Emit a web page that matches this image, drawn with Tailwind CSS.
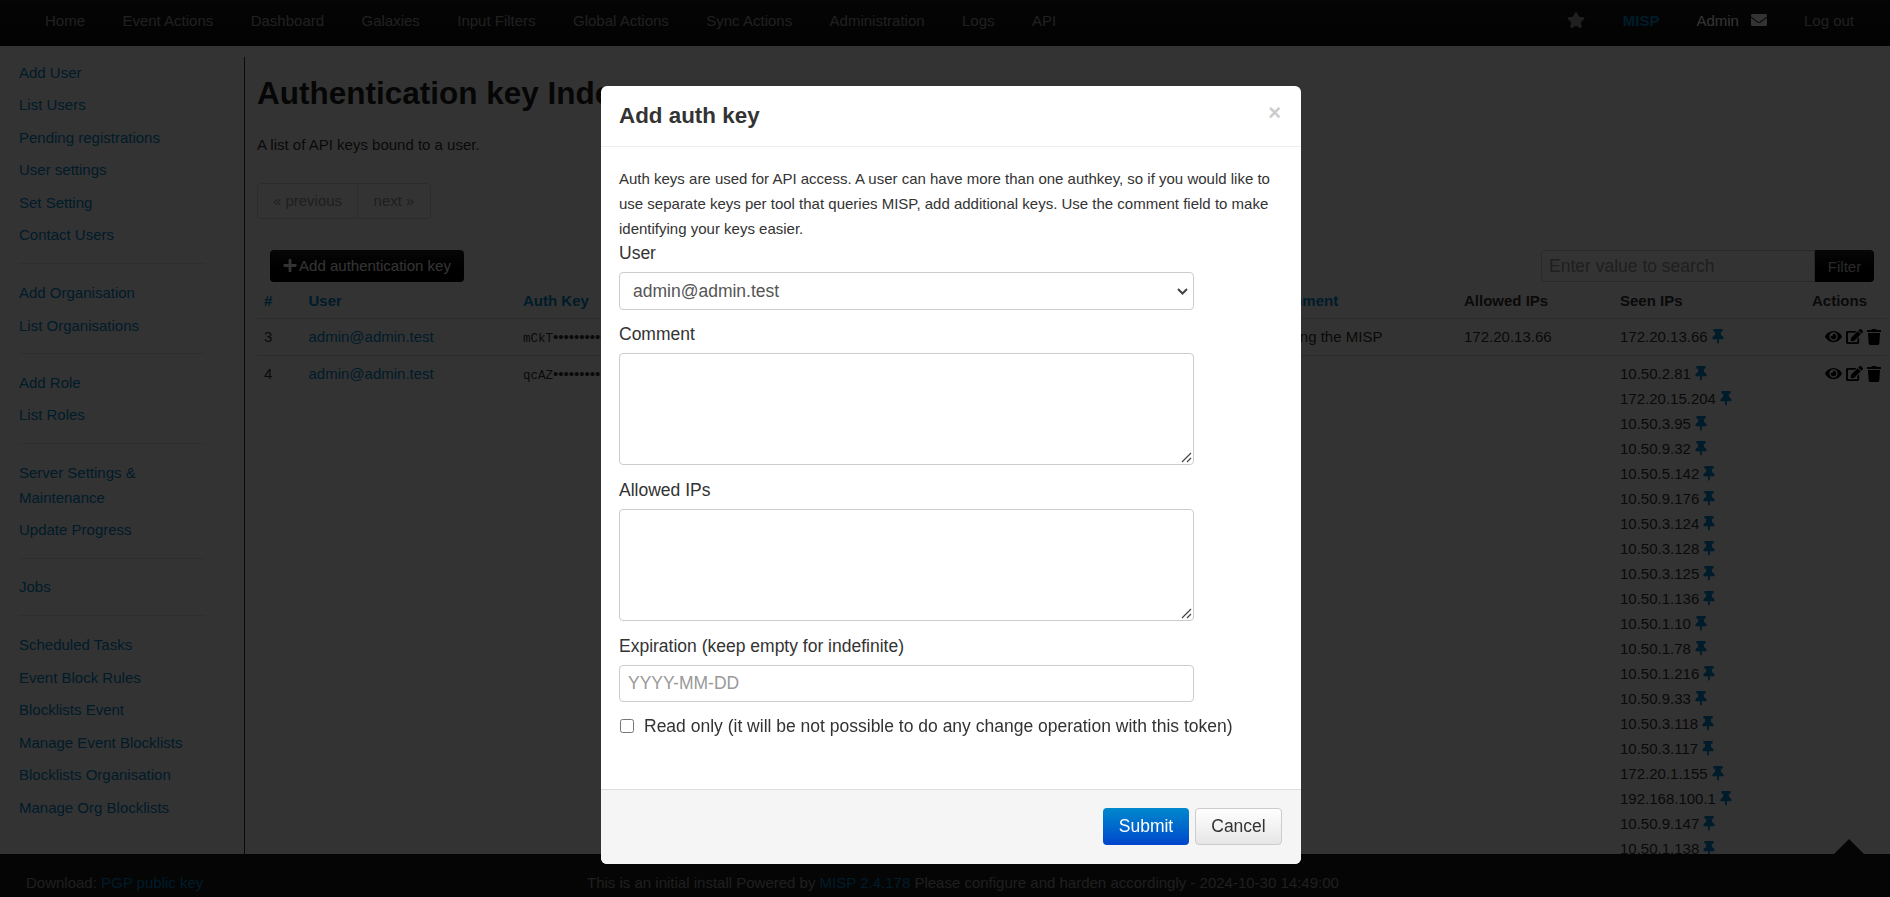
<!DOCTYPE html>
<html lang="en">
<head>
<meta charset="utf-8">
<title>MISP</title>
<script src="https://cdn.jsdelivr.net/npm/@tailwindcss/browser@4"></script>
</head>
<body class="h-screen overflow-hidden bg-white font-['Liberation_Sans',Arial,sans-serif] text-[15px] leading-[25px] text-[#333]">
<div class="flex h-screen flex-col">
  <header class="flex h-[46px] shrink-0 bg-gradient-to-b from-[#1a1a1a] to-[#0d0d0d] pb-[6px] text-[#a0a0a0]">
    <nav class="flex flex-1 items-center gap-[37.4px] pl-[45px]">
      <a>Home</a><a>Event Actions</a><a>Dashboard</a><a>Galaxies</a><a>Input Filters</a><a>Global Actions</a><a>Sync Actions</a><a>Administration</a><a>Logs</a><a>API</a>
    </nav>
    <div class="flex items-center pr-[36px]">
      <svg class="mr-[38px] h-[16px] w-[18px] fill-[#a0a0a0]" viewBox="0 0 576 512"><path d="M259.3 17.8L194 150.2 47.9 171.5c-26.2 3.8-36.7 36.1-17.7 54.6l105.7 103-25 145.5c-4.5 26.3 23.2 46 46.4 33.7L288 439.6l130.7 68.7c23.2 12.2 50.9-7.4 46.4-33.7l-25-145.5 105.7-103c19-18.5 8.5-50.8-17.7-54.6L382 150.2 316.7 17.8c-11.7-23.6-45.6-23.9-57.4 0z"/></svg>
      <a class="mr-[37px] font-bold text-[#0088cc]">MISP</a>
      <a class="mr-[12px] text-white">Admin</a>
      <svg class="mr-[37px] h-[16px] w-[16px] fill-white" viewBox="0 0 512 512"><path d="M502.3 190.8c3.9-3.1 9.7-.2 9.7 4.7V400c0 26.5-21.5 48-48 48H48c-26.5 0-48-21.5-48-48V195.6c0-5 5.7-7.8 9.7-4.7 22.4 17.4 52.1 39.5 154.1 113.6 21.1 15.4 56.7 47.8 92.2 47.6 35.7.3 72-32.8 92.3-47.6 102-74.1 131.6-96.3 154-113.7zM256 320c23.2.4 56.6-29.2 73.4-41.4 132.7-96.3 142.8-104.7 173.4-128.7 5.8-4.5 9.2-11.5 9.2-18.9v-19c0-26.5-21.5-48-48-48H48C21.5 64 0 85.5 0 112v19c0 7.4 3.4 14.3 9.2 18.9 30.6 23.9 40.7 32.4 173.4 128.7 16.8 12.2 50.2 41.8 73.4 41.4z"/></svg>
      <a>Log out</a>
    </div>
  </header>

  <div class="flex min-h-0 flex-1 overflow-hidden">
    <aside class="mt-[11px] w-[245px] shrink-0 border-r border-[#333] pl-[19px] text-[#0088cc]">
      <a class="-mt-px flex h-[32.5px] items-center">Add User</a>
      <a class="flex h-[32.5px] items-center">List Users</a>
      <a class="flex h-[32.5px] items-center">Pending registrations</a>
      <a class="flex h-[32.5px] items-center">User settings</a>
      <a class="flex h-[32.5px] items-center">Set Setting</a>
      <a class="flex h-[32.5px] items-center">Contact Users</a>
      <div class="flex h-[25.5px] w-[186px] items-center"><div class="h-px w-full bg-[#e5e5e5]"></div></div>
      <a class="flex h-[32.5px] items-center">Add Organisation</a>
      <a class="flex h-[32.5px] items-center">List Organisations</a>
      <div class="flex h-[24.5px] w-[186px] items-center"><div class="h-px w-full bg-[#e5e5e5]"></div></div>
      <a class="flex h-[32.5px] items-center">Add Role</a>
      <a class="flex h-[32.5px] items-center">List Roles</a>
      <div class="flex h-[25px] w-[186px] items-center"><div class="h-px w-full bg-[#e5e5e5]"></div></div>
      <a class="block py-[3.75px]">Server Settings &amp;<br>Maintenance</a>
      <a class="flex h-[32.5px] items-center">Update Progress</a>
      <div class="flex h-[24.5px] w-[186px] items-center"><div class="h-px w-full bg-[#e5e5e5]"></div></div>
      <a class="flex h-[32.5px] items-center">Jobs</a>
      <div class="flex h-[25.5px] w-[186px] items-center"><div class="h-px w-full bg-[#e5e5e5]"></div></div>
      <a class="flex h-[32.5px] items-center">Scheduled Tasks</a>
      <a class="flex h-[32.5px] items-center">Event Block Rules</a>
      <a class="flex h-[32.5px] items-center">Blocklists Event</a>
      <a class="flex h-[32.5px] items-center">Manage Event Blocklists</a>
      <a class="flex h-[32.5px] items-center">Blocklists Organisation</a>
      <a class="flex h-[32.5px] items-center">Manage Org Blocklists</a>
    </aside>

    <main class="min-w-0 flex-1 pl-[12px] pr-[3px]">
      <h2 class="mt-[27px] h-[40px] text-[31.5px] leading-[40px] font-bold text-[#222]">Authentication key Index</h2>
      <p class="mt-[19px]">A list of API keys bound to a user.</p>
      <div class="mt-[26px] flex h-[36px] w-[174px] rounded-[4px] border border-[#ddd] text-[#999]">
        <span class="flex w-[100px] items-center justify-center border-r border-[#ddd] pb-px">« previous</span>
        <span class="flex flex-1 items-center justify-center pb-px">next »</span>
      </div>
      <div class="mt-[31px] flex h-[32px] items-stretch justify-between pl-[13px] pr-[13px]">
        <button class="flex w-[194px] items-center justify-center gap-[2px] rounded-[4px] bg-gradient-to-b from-[#222] to-[#000] pb-px text-white">
          <svg class="h-[15px] w-[14px] fill-white" viewBox="0 0 448 512"><path d="M416 208H272V64c0-17.67-14.33-32-32-32h-32c-17.67 0-32 14.33-32 32v144H32c-17.67 0-32 14.33-32 32v32c0 17.67 14.33 32 32 32h144v144c0 17.67 14.33 32 32 32h32c17.67 0 32-14.33 32-32V304h144c17.67 0 32-14.33 32-32v-32c0-17.67-14.33-32-32-32z"/></svg>
          <span>Add authentication key</span>
        </button>
        <div class="flex">
          <input class="h-[32px] w-[274px] rounded-l-[4px] border border-[#ccc] bg-white px-[7px] text-[17.5px] placeholder:text-[#999]" placeholder="Enter value to search">
          <button class="w-[59px] rounded-r-[4px] bg-gradient-to-b from-[#222] to-[#000] text-[#ccc]">Filter</button>
        </div>
      </div>

      <div class="mt-[4px] grid h-[33px] grid-cols-[44.5px_214.5px_746px_195px_156px_192px_75px] items-center border-b border-[#ddd] pb-[4px] pl-[7px] font-bold">
        <a class="text-[#0088cc]">#</a><a class="text-[#0088cc]">User</a><a class="text-[#0088cc]">Auth Key</a><a class="text-[#0088cc]">Comment</a><span>Allowed IPs</span><span>Seen IPs</span><span>Actions</span>
      </div>
      <div class="grid grid-cols-[44.5px_214.5px_746px_195px_156px_192px_75px] border-b border-[#ddd] pb-[6px] pl-[7px] pt-[5px]">
        <span>3</span><a class="text-[#0088cc]">admin@admin.test</a><code class="h-[25px] overflow-hidden whitespace-nowrap font-['Liberation_Mono',monospace] text-[12.5px]">mCkT<span class="font-['Liberation_Sans',sans-serif] text-[15px]">••••••••••••••••••••••••••••••••</span></code><span>Testing the MISP</span><span>172.20.13.66</span>
        <span class="flex h-[25px] items-center gap-[4px]">172.20.13.66<svg class="h-[15px] w-[12px] fill-[#0088cc]" viewBox="0 0 384 512"><use href="#pin"/></svg></span>
        <span class="flex h-[25px] items-center justify-end gap-[4px] pr-[6px] text-black">
          <svg class="h-[15px] w-[17px]" viewBox="0 0 576 512"><path d="M572.52 241.4C518.29 135.59 410.93 64 288 64S57.68 135.64 3.48 241.41a32.35 32.35 0 0 0 0 29.19C57.71 376.41 165.07 448 288 448s230.32-71.64 284.52-177.41a32.35 32.35 0 0 0 0-29.19zM288 400a144 144 0 1 1 144-144 143.93 143.93 0 0 1-144 144zm0-240a95.31 95.31 0 0 0-25.31 3.79 47.85 47.85 0 0 1-66.9 66.9A95.78 95.78 0 1 0 288 160z"/></svg>
          <svg class="h-[15px] w-[17px]" viewBox="0 0 576 512"><path d="M402.6 83.2l90.2 90.2c3.8 3.8 3.8 10 0 13.8L274.4 405.6l-92.8 10.3c-12.4 1.4-22.9-9.1-21.5-21.5l10.3-92.8L388.8 83.2c3.8-3.8 10-3.8 13.8 0zm162-22.9l-48.8-48.8c-15.2-15.2-39.9-15.2-55.2 0l-35.4 35.4c-3.8 3.8-3.8 10 0 13.8l90.2 90.2c3.8 3.8 10 3.8 13.8 0l35.4-35.4c15.2-15.3 15.2-40 0-55.2zM384 346.2V448H64V128h229.8c3.2 0 6.2-1.3 8.5-3.5l40-40c7.6-7.6 2.2-20.5-8.5-20.5H48C21.5 64 0 85.5 0 112v352c0 26.5 21.5 48 48 48h352c26.5 0 48-21.5 48-48V306.2c0-10.7-12.9-16-20.5-8.5l-40 40c-2.2 2.3-3.5 5.3-3.5 8.5z"/></svg>
          <svg class="h-[16px] w-[14px]" viewBox="0 0 448 512"><path d="M432 32H312l-9.4-18.7A24 24 0 0 0 281.1 0H166.8a23.72 23.72 0 0 0-21.4 13.3L136 32H16A16 16 0 0 0 0 48v32a16 16 0 0 0 16 16h416a16 16 0 0 0 16-16V48a16 16 0 0 0-16-16zM53.2 467a48 48 0 0 0 47.9 45h245.8a48 48 0 0 0 47.9-45L416 128H32z"/></svg>
        </span>
      </div>
      <div class="grid grid-cols-[44.5px_214.5px_746px_195px_156px_192px_75px] pb-[6px] pl-[7px] pt-[5px]">
        <span>4</span><a class="text-[#0088cc]">admin@admin.test</a><code class="h-[25px] overflow-hidden whitespace-nowrap font-['Liberation_Mono',monospace] text-[12.5px]">qcAZ<span class="font-['Liberation_Sans',sans-serif] text-[15px]">••••••••••••••••••••••••••••••••</span></code><span></span><span></span>
        <div>
          <span class="flex h-[25px] items-center gap-[4px]">10.50.2.81<svg class="h-[15px] w-[12px] fill-[#0088cc]" viewBox="0 0 384 512"><use href="#pin"/></svg></span>
          <span class="flex h-[25px] items-center gap-[4px]">172.20.15.204<svg class="h-[15px] w-[12px] fill-[#0088cc]" viewBox="0 0 384 512"><use href="#pin"/></svg></span>
          <span class="flex h-[25px] items-center gap-[4px]">10.50.3.95<svg class="h-[15px] w-[12px] fill-[#0088cc]" viewBox="0 0 384 512"><use href="#pin"/></svg></span>
          <span class="flex h-[25px] items-center gap-[4px]">10.50.9.32<svg class="h-[15px] w-[12px] fill-[#0088cc]" viewBox="0 0 384 512"><use href="#pin"/></svg></span>
          <span class="flex h-[25px] items-center gap-[4px]">10.50.5.142<svg class="h-[15px] w-[12px] fill-[#0088cc]" viewBox="0 0 384 512"><use href="#pin"/></svg></span>
          <span class="flex h-[25px] items-center gap-[4px]">10.50.9.176<svg class="h-[15px] w-[12px] fill-[#0088cc]" viewBox="0 0 384 512"><use href="#pin"/></svg></span>
          <span class="flex h-[25px] items-center gap-[4px]">10.50.3.124<svg class="h-[15px] w-[12px] fill-[#0088cc]" viewBox="0 0 384 512"><use href="#pin"/></svg></span>
          <span class="flex h-[25px] items-center gap-[4px]">10.50.3.128<svg class="h-[15px] w-[12px] fill-[#0088cc]" viewBox="0 0 384 512"><use href="#pin"/></svg></span>
          <span class="flex h-[25px] items-center gap-[4px]">10.50.3.125<svg class="h-[15px] w-[12px] fill-[#0088cc]" viewBox="0 0 384 512"><use href="#pin"/></svg></span>
          <span class="flex h-[25px] items-center gap-[4px]">10.50.1.136<svg class="h-[15px] w-[12px] fill-[#0088cc]" viewBox="0 0 384 512"><use href="#pin"/></svg></span>
          <span class="flex h-[25px] items-center gap-[4px]">10.50.1.10<svg class="h-[15px] w-[12px] fill-[#0088cc]" viewBox="0 0 384 512"><use href="#pin"/></svg></span>
          <span class="flex h-[25px] items-center gap-[4px]">10.50.1.78<svg class="h-[15px] w-[12px] fill-[#0088cc]" viewBox="0 0 384 512"><use href="#pin"/></svg></span>
          <span class="flex h-[25px] items-center gap-[4px]">10.50.1.216<svg class="h-[15px] w-[12px] fill-[#0088cc]" viewBox="0 0 384 512"><use href="#pin"/></svg></span>
          <span class="flex h-[25px] items-center gap-[4px]">10.50.9.33<svg class="h-[15px] w-[12px] fill-[#0088cc]" viewBox="0 0 384 512"><use href="#pin"/></svg></span>
          <span class="flex h-[25px] items-center gap-[4px]">10.50.3.118<svg class="h-[15px] w-[12px] fill-[#0088cc]" viewBox="0 0 384 512"><use href="#pin"/></svg></span>
          <span class="flex h-[25px] items-center gap-[4px]">10.50.3.117<svg class="h-[15px] w-[12px] fill-[#0088cc]" viewBox="0 0 384 512"><use href="#pin"/></svg></span>
          <span class="flex h-[25px] items-center gap-[4px]">172.20.1.155<svg class="h-[15px] w-[12px] fill-[#0088cc]" viewBox="0 0 384 512"><use href="#pin"/></svg></span>
          <span class="flex h-[25px] items-center gap-[4px]">192.168.100.1<svg class="h-[15px] w-[12px] fill-[#0088cc]" viewBox="0 0 384 512"><use href="#pin"/></svg></span>
          <span class="flex h-[25px] items-center gap-[4px]">10.50.9.147<svg class="h-[15px] w-[12px] fill-[#0088cc]" viewBox="0 0 384 512"><use href="#pin"/></svg></span>
          <span class="flex h-[25px] items-center gap-[4px]">10.50.1.138<svg class="h-[15px] w-[12px] fill-[#0088cc]" viewBox="0 0 384 512"><use href="#pin"/></svg></span>
        </div>
        <span class="flex h-[25px] items-center justify-end gap-[4px] pr-[6px] text-black">
          <svg class="h-[15px] w-[17px]" viewBox="0 0 576 512"><path d="M572.52 241.4C518.29 135.59 410.93 64 288 64S57.68 135.64 3.48 241.41a32.35 32.35 0 0 0 0 29.19C57.71 376.41 165.07 448 288 448s230.32-71.64 284.52-177.41a32.35 32.35 0 0 0 0-29.19zM288 400a144 144 0 1 1 144-144 143.93 143.93 0 0 1-144 144zm0-240a95.31 95.31 0 0 0-25.31 3.79 47.85 47.85 0 0 1-66.9 66.9A95.78 95.78 0 1 0 288 160z"/></svg>
          <svg class="h-[15px] w-[17px]" viewBox="0 0 576 512"><path d="M402.6 83.2l90.2 90.2c3.8 3.8 3.8 10 0 13.8L274.4 405.6l-92.8 10.3c-12.4 1.4-22.9-9.1-21.5-21.5l10.3-92.8L388.8 83.2c3.8-3.8 10-3.8 13.8 0zm162-22.9l-48.8-48.8c-15.2-15.2-39.9-15.2-55.2 0l-35.4 35.4c-3.8 3.8-3.8 10 0 13.8l90.2 90.2c3.8 3.8 10 3.8 13.8 0l35.4-35.4c15.2-15.3 15.2-40 0-55.2zM384 346.2V448H64V128h229.8c3.2 0 6.2-1.3 8.5-3.5l40-40c7.6-7.6 2.2-20.5-8.5-20.5H48C21.5 64 0 85.5 0 112v352c0 26.5 21.5 48 48 48h352c26.5 0 48-21.5 48-48V306.2c0-10.7-12.9-16-20.5-8.5l-40 40c-2.2 2.3-3.5 5.3-3.5 8.5z"/></svg>
          <svg class="h-[16px] w-[14px]" viewBox="0 0 448 512"><path d="M432 32H312l-9.4-18.7A24 24 0 0 0 281.1 0H166.8a23.72 23.72 0 0 0-21.4 13.3L136 32H16A16 16 0 0 0 0 48v32a16 16 0 0 0 16 16h416a16 16 0 0 0 16-16V48a16 16 0 0 0-16-16zM53.2 467a48 48 0 0 0 47.9 45h245.8a48 48 0 0 0 47.9-45L416 128H32z"/></svg>
        </span>
      </div>
    </main>
  </div>

  <footer class="relative flex h-[43px] shrink-0 items-end bg-[#1c1c1c] pb-[2px] pl-[26px] text-[#999]">
    <div class="absolute bottom-full right-[26px] h-0 w-0 border-x-[15px] border-b-[15px] border-x-transparent border-b-[#1c1c1c]"></div>
    <span class="h-[25px] w-[561px] shrink-0">Download: <a class="text-[#0088cc]">PGP public key</a></span>
    <span class="h-[25px]">This is an initial install Powered by <a class="text-[#0088cc]">MISP 2.4.178</a> Please configure and harden accordingly - 2024-10-30 14:49:00</span>
  </footer>
</div>

<svg class="hidden"><defs><path id="pin" d="M298.028 214.267L285.793 96H328c13.255 0 24-10.745 24-24V24c0-13.255-10.745-24-24-24H56C42.745 0 32 10.745 32 24v48c0 13.255 10.745 24 24 24h42.207L85.972 214.267C37.465 236.82 0 277.261 0 328c0 13.255 10.745 24 24 24h136v104.007c0 1.242.289 2.467.845 3.578l24 48c2.941 5.882 11.364 5.893 14.311 0l24-48a8.008 8.008 0 0 0 .845-3.578V352h136c13.255 0 24-10.745 24-24-.001-51.183-37.983-91.42-85.973-113.733z"/></defs></svg>

<div class="fixed inset-0 bg-black/80"></div>

<div class="fixed left-[601px] top-[86px] flex h-[778px] w-[700px] flex-col rounded-[6px] bg-white">
  <div class="flex h-[61px] shrink-0 justify-between border-b border-[#eee] pl-[18px] pr-[20px]">
    <h3 class="mt-[17px] text-[22.4px] leading-[25px] font-bold">Add auth key</h3>
    <span class="mt-[13px] text-[22px] leading-[28px] font-bold text-[#ccc]">×</span>
  </div>
  <div class="flex-1 px-[18px] pt-[19px]">
    <p>Auth keys are used for API access. A user can have more than one authkey, so if you would like to use separate keys per tool that queries MISP, add additional keys. Use the comment field to make identifying your keys easier.</p>
    <label class="mb-[7px] block h-[24px] text-[17.5px] leading-[24px]">User</label>
    <div class="relative mb-[12px] w-[575px]">
      <select class="block h-[38px] w-full appearance-none rounded-[4px] border border-[#ccc] bg-white pl-[13px] text-[17.5px] text-[#555]"><option>admin@admin.test</option></select>
      <svg class="pointer-events-none absolute right-[6px] top-[16px] h-[7px] w-[11px] fill-none stroke-[#444] stroke-2" viewBox="0 0 11 7"><path d="M1 1l4.5 4.5L10 1"/></svg>
    </div>
    <label class="mb-[7px] block h-[24px] text-[17.5px] leading-[24px]">Comment</label>
    <div class="relative mb-[13px] w-[575px]">
      <textarea class="block h-[112px] w-full resize-none rounded-[4px] border border-[#ccc] bg-white"></textarea>
      <svg class="pointer-events-none absolute bottom-[2px] right-[2px] h-[11px] w-[11px] stroke-[#444] stroke-[1.2]" viewBox="0 0 11 11"><path d="M1 10L10 1M6 10l4-4"/></svg>
    </div>
    <label class="mb-[7px] block h-[24px] text-[17.5px] leading-[24px]">Allowed IPs</label>
    <div class="relative mb-[13px] w-[575px]">
      <textarea class="block h-[112px] w-full resize-none rounded-[4px] border border-[#ccc] bg-white"></textarea>
      <svg class="pointer-events-none absolute bottom-[2px] right-[2px] h-[11px] w-[11px] stroke-[#444] stroke-[1.2]" viewBox="0 0 11 11"><path d="M1 10L10 1M6 10l4-4"/></svg>
    </div>
    <label class="mb-[7px] block h-[24px] text-[17.5px] leading-[24px]">Expiration (keep empty for indefinite)</label>
    <input class="mb-[12px] block h-[37px] w-[575px] rounded-[4px] border border-[#ccc] bg-white px-[8px] text-[17.5px] placeholder:text-[#999]" placeholder="YYYY-MM-DD">
    <label class="flex h-[24px] items-center gap-[10px] text-[17.5px]"><input type="checkbox" class="ml-[1px] h-[14px] w-[14px]">Read only (it will be not possible to do any change operation with this token)</label>
  </div>
  <div class="flex h-[75px] shrink-0 items-start justify-end gap-[6px] rounded-b-[6px] border-t border-[#ddd] bg-[#f5f5f5] pr-[19px] pt-[18px]">
    <button class="h-[37px] w-[86px] rounded-[4px] bg-gradient-to-b from-[#0088cc] to-[#0044cc] text-[17.5px] text-white">Submit</button>
    <button class="h-[37px] w-[87px] rounded-[4px] border border-[#ccc] bg-gradient-to-b from-white to-[#e6e6e6] text-[17.5px] text-[#333]">Cancel</button>
  </div>
</div>
</body>
</html>
